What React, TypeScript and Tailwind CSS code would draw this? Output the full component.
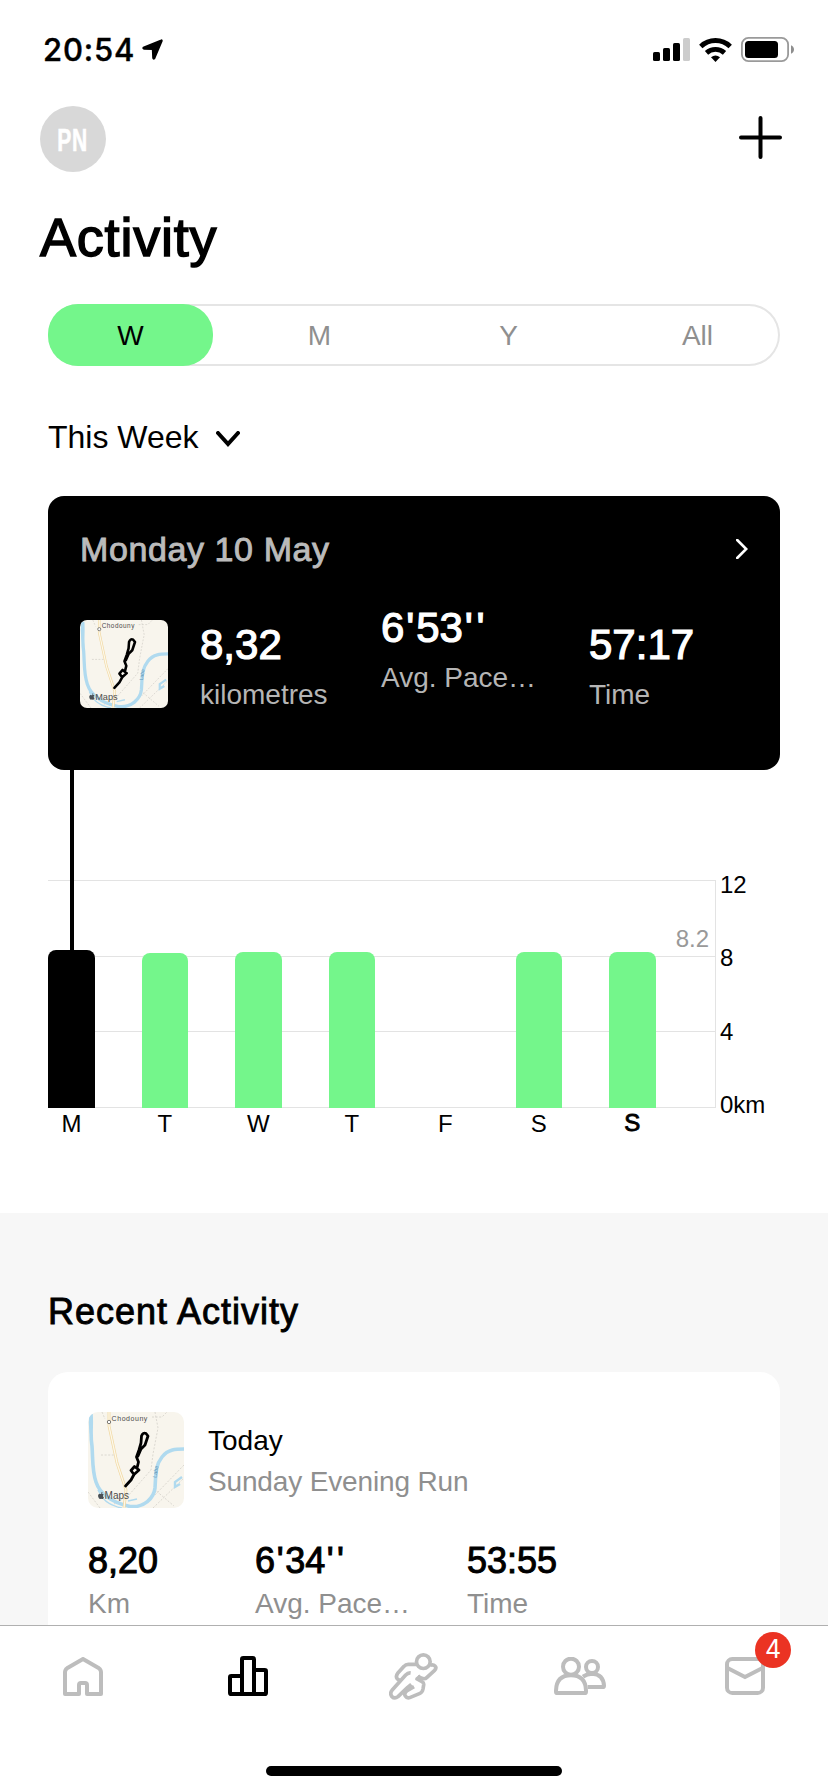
import type { ReactNode } from "react";
import { FaApple } from "react-icons/fa";

const medium = "[-webkit-text-stroke:0.9px_currentColor]";

const periods = ["W", "M", "Y", "All"];

const week = [
  { label: "M", height: 158, selected: true },
  { label: "T", height: 155 },
  { label: "W", height: 156 },
  { label: "T", height: 156 },
  { label: "F", height: 0 },
  { label: "S", height: 156 },
  { label: "S", height: 156, today: true },
];

const axisLabels = ["12", "8", "4", "0km"];

function StatusBar() {
  return (
    <div className="flex h-[99px] shrink-0 items-center justify-between pl-[43px] pr-[34px]">
      <div className="flex items-center">
        <span className="font-[Inter,sans-serif] text-[31px] leading-[40px] font-medium tracking-[0.8px] [-webkit-text-stroke:0.4px_currentColor]">
          20:54
        </span>
        <svg className="ml-[7px] h-[21px] w-[21px]" viewBox="0 0 21 21">
          <path
            d="M19.3 1.2 1.3 8.4Q.8 9.8 2 9.9L10.6 10.2 11 18.8Q11.3 20.5 12.5 19.4L19.9 2Q20 .9 19.3 1.2Z"
            fill="black"
            stroke="black"
            strokeWidth="1.6"
            strokeLinejoin="round"
          />
        </svg>
      </div>
      <div className="flex items-center">
        <svg className="h-[23px] w-[37px]" viewBox="0 0 37 23">
          <rect x="0" y="14" width="7" height="9" rx="1.6" />
          <rect x="10" y="10" width="7" height="13" rx="1.6" />
          <rect x="20" y="5" width="7" height="18" rx="1.6" />
          <rect x="30" y="0" width="7" height="23" rx="1.6" fill="#cccccc" />
        </svg>
        <svg className="ml-[9px] h-[24px] w-[33px]" viewBox="0 0 33 24" fill="none" stroke="black">
          <path d="M1.8 8.4Q8 2.5 16.5 2.5T31.2 8.4" strokeWidth="4.9" />
          <path d="M7.5 14.8Q11.3 11.4 16.5 11.4T25.5 14.8" strokeWidth="4.9" />
          <path d="M16.5 24 12 19.3Q16.5 15.7 21 19.3Z" fill="black" stroke="none" />
        </svg>
        <svg className="ml-[9px] h-[25px] w-[53px]" viewBox="0 0 53 25">
          <rect x="0.9" y="0.9" width="46.2" height="23.2" rx="6.5" fill="none" stroke="#9a9a9a" strokeWidth="1.8" />
          <rect x="4" y="4" width="33" height="17" rx="3.5" />
          <path d="M50 8.2Q53 9.6 53 12.5T50 16.8Z" fill="#8e8e8e" />
        </svg>
      </div>
    </div>
  );
}

function MapThumb({ className }: { className: string }) {
  return (
    <svg className={className} viewBox="0 0 96 96" fill="none">
      <rect width="96" height="96" fill="#f8f5ed" />
      <g stroke="#d3d0c9" strokeWidth="0.8" strokeDasharray="2 1.6">
        <path d="M67 0 70 16 65 42 63 58 40 84 26 92" />
        <path d="M96 53 66 84M66 77 86 94M0 80 12 96M65 96 96 66M64 5H74L79 0" />
        <path d="M13 43H27M14 0 17 7" />
      </g>
      <path d="M3 2C4 14 2 22 4 34C5 48 4 58 8 70C12 82 22 90 42 94.5C56 96 66 86 67 76C68 62 67 54 74 45C80 37 88 37 97 37" stroke="#b0daef" strokeWidth="3.6" />
      <path d="M2.5 4C0 14 4 24 4 30" stroke="#b0daef" strokeWidth="2" />
      <path d="M10 78Q16 93 34 96M40 89 49 87" stroke="#b0daef" strokeWidth="1.4" />
      <path d="M94 65 87 70 87 75 92 72" stroke="#b0daef" strokeWidth="2.4" />
      <path d="M21 0V14L29 51 38 78 36 96" stroke="#f1d9a4" strokeWidth="2.8" />
      <path d="M21 0V14L29 51 38 78 36 96" stroke="#fdf8ea" strokeWidth="1.3" />
      <path
        d="M37.5 74 43 68 46 62.5 43 58.5 46.5 54.5 51 58 46 62.5M49 56 50.5 50 48.5 45 51 38 53 31 53.5 24Q55 20 58 21.5L60 24 57 33 53 37 50 44"
        stroke="black"
        strokeWidth="2.8"
        strokeLinejoin="round"
        strokeLinecap="round"
      />
      <circle cx="21" cy="10" r="1.7" fill="white" stroke="#5b5b5b" strokeWidth="0.8" />
      <text x="23.6" y="8.6" fontFamily="Liberation Sans, sans-serif" fontSize="7" letterSpacing="0.55" fill="#4a4a4a">
        Chodouny
      </text>
      <text x="68.5" y="66" fontFamily="Liberation Sans, sans-serif" fontSize="5.5" fill="#5d93b5" transform="rotate(-80 68.5 66)">
        Labe
      </text>
      <FaApple x="9" y="79.5" size="8" color="#4a5055" />
      <text x="16.6" y="87" fontFamily="Liberation Sans, sans-serif" fontSize="10" fill="#4c4c4c">
        Maps
      </text>
    </svg>
  );
}

// minute and second marks get a little air on both sides
function StatValue({ value }: { value: string }) {
  return (
    <>
      {value.split("").map((char, index) => (
        <span key={index} className={char === "'" ? "mx-[0.045em]" : ""}>
          {char}
        </span>
      ))}
    </>
  );
}

function CardStat({ value, label, className = "" }: { value: string; label: string; className?: string }) {
  return (
    <div className={className}>
      <div className="text-[42px] leading-[48px] text-white [-webkit-text-stroke:1.2px_currentColor]">
        <StatValue value={value} />
      </div>
      <div className="mt-[10px] text-[28px] leading-[32px] text-[#b5b5b5]">{label}</div>
    </div>
  );
}

function SelectedDayCard() {
  return (
    <div className="mx-12 mt-[39px] h-[274px] shrink-0 rounded-2xl bg-black px-8 pt-[33px]">
      <div className="flex items-center justify-between">
        <span className={`text-[34px] leading-[40px] tracking-[0.6px] text-[#bbbbbb] ${medium}`}>Monday 10 May</span>
        <svg className="h-[20px] w-[12px]" viewBox="0 0 12 20" fill="none" stroke="white" strokeWidth="2.6">
          <path d="M1.2 1 10.2 10 1.2 19" strokeLinecap="round" />
        </svg>
      </div>
      <div className="mt-[51px] flex">
        <MapThumb className="mr-8 h-[88px] w-[88px] shrink-0 rounded-[7px]" />
        <CardStat className="mt-px w-[181px]" value="8,32" label="kilometres" />
        <CardStat className="-mt-4 w-[208px]" value="6'53''" label="Avg. Pace…" />
        <CardStat className="mt-px" value="57:17" label="Time" />
      </div>
    </div>
  );
}

function WeekChart() {
  return (
    <div className="relative flex h-[443px] shrink-0 pl-12 pt-[110px]">
      <div className="absolute left-[70px] top-0 z-10 h-[182px] w-1 bg-black" />
      <div className="w-[668px]">
        <div className="relative h-[228px] border-r border-[#e3e3e3]">
          <div className="absolute inset-0 flex flex-col justify-between">
            {axisLabels.map((label) => (
              <div key={label} className="h-px bg-[#e3e3e3]" />
            ))}
          </div>
          <div className="relative flex h-full items-end gap-[46.75px]">
            {week.map((day, index) => (
              <div
                key={index}
                className={`w-[46.75px] shrink-0 rounded-t-lg ${day.selected ? "bg-black" : "bg-[#74f68b]"}`}
                style={{ height: day.height }}
              />
            ))}
          </div>
          <span className="absolute right-[6px] top-[47px] text-[24px] leading-[24px] text-[#999999]">8.2</span>
        </div>
        <div className="mt-1 flex gap-[46.75px]">
          {week.map((day, index) => (
            <div
              key={index}
              className={`w-[46.75px] shrink-0 text-center text-[24px] leading-[24px] ${day.today ? "-mt-px [-webkit-text-stroke:0.9px_black]" : ""}`}
            >
              {day.label}
            </div>
          ))}
        </div>
      </div>
      <div className="-mt-[7px] ml-1 flex h-[244px] flex-col justify-between text-[24px] leading-[24px]">
        {axisLabels.map((label) => (
          <span key={label}>{label}</span>
        ))}
      </div>
    </div>
  );
}

function RunStat({ value, label, className = "" }: { value: string; label: string; className?: string }) {
  return (
    <div className={className}>
      <div className="text-[36px] leading-[40px] [-webkit-text-stroke:1px_currentColor]">
        <StatValue value={value} />
      </div>
      <div className="mt-[7px] text-[28px] leading-[32px] text-[#8f8f8f]">{label}</div>
    </div>
  );
}

function RecentActivity() {
  return (
    <div className="min-h-0 flex-1 overflow-hidden bg-[#f7f7f7] px-12 pt-[77px]">
      <h2 className={`text-[36px] leading-[44px] tracking-[1px] ${medium}`}>Recent Activity</h2>
      <div className="mt-[38px] h-[300px] rounded-[20px] bg-white p-10">
        <div className="flex items-center gap-6">
          <MapThumb className="h-[96px] w-[96px] rounded-[10px]" />
          <div className="mt-0.5 flex flex-col gap-[9px] text-[28px] leading-[32px]">
            <span>Today</span>
            <span className="tracking-[-0.15px] text-[#8f8f8f]">Sunday Evening Run</span>
          </div>
        </div>
        <div className="mt-[33px] flex">
          <RunStat className="w-[167px]" value="8,20" label="Km" />
          <RunStat className="w-[212px]" value="6'34''" label="Avg. Pace…" />
          <RunStat value="53:55" label="Time" />
        </div>
      </div>
    </div>
  );
}

function Tab({ children }: { children: ReactNode }) {
  return <div className="flex h-full flex-1 items-center justify-center">{children}</div>;
}

function TabBar() {
  return (
    <div className="h-[167px] shrink-0 border-t border-[#b0b0b0] bg-white">
      <div className="flex h-[100px] text-[#bdbdbd]">
        <Tab>
          <svg className="h-[39px] w-[40px]" viewBox="189 168 120 117" fill="none" stroke="currentColor" strokeWidth="12">
            <path d="M195 214Q195 206 201 202L249 174 297 202Q303 206 303 214V279H261V252Q261 246 255 246H243Q237 246 237 252V279H195Z" strokeLinejoin="round" />
          </svg>
        </Tab>
        <Tab>
          <svg className="h-[40px] w-[40px]" viewBox="687 168 120 120" fill="none" stroke="black" strokeWidth="12" strokeLinejoin="round">
            <rect x="693" y="228" width="36" height="54" rx="4" />
            <rect x="729" y="174" width="36" height="108" rx="4" />
            <rect x="765" y="210" width="36" height="72" rx="4" />
          </svg>
        </Tab>
        <Tab>
          <svg className="h-[47px] w-[49px]" viewBox="54 156 147 141" fill="none" stroke="currentColor" strokeWidth="11" strokeLinejoin="round">
            <circle cx="157" cy="182" r="20.5" />
            <path d="M136 190H112Q104 190 99 196L80 217Q73 226 79 234L86 238" />
            <path d="M119 216Q111 215 104 222L63 268Q56 277 62 286Q71 295 81 287L110 259 121 250" />
            <path d="M129 257 107 270Q98 277 103 285Q108 293 118 289L147 277Q154 274 156 264L158 252Q159 245 153 242L138 234 149 225" />
            <path d="M140 227 157 233Q163 234 168 229L190 209Q198 201 192 195Q187 190 177 193" />
          </svg>
        </Tab>
        <Tab>
          <svg className="h-[38px] w-[52px]" viewBox="549 171 156 114" fill="none" stroke="currentColor" strokeWidth="12" strokeLinejoin="round">
            <circle cx="600" cy="200" r="24" />
            <path d="M555 272Q556 226 600 226Q644 226 645 272V275Q645 279 641 279H559Q555 279 555 275Z" />
            <circle cx="663" cy="201" r="18" />
            <path d="M636 230Q648 221 664 221Q697 223 699 257Q699 261 695 261H650" />
          </svg>
        </Tab>
        <Tab>
          <div className="relative">
            <svg className="h-[38px] w-[40px]" viewBox="1065 171 120 114" fill="none" stroke="currentColor" strokeWidth="12">
              <rect x="1071" y="177" width="108" height="102" rx="16" />
              <path d="M1071 203 1125 231 1179 203" />
            </svg>
            <span className="absolute -right-[26px] -top-[25px] flex h-9 w-9 items-center justify-center rounded-full bg-[#eb3323] font-[Inter,sans-serif] text-[25px] text-white">
              4
            </span>
          </div>
        </Tab>
      </div>
      <div className="mx-auto mt-[40px] h-[10px] w-[296px] rounded-full bg-black" />
    </div>
  );
}

export default function App() {
  return (
    <div className="flex h-[1792px] w-[828px] flex-col overflow-hidden bg-white font-[Liberation_Sans,Arial,sans-serif] text-black">
      <StatusBar />

      <div className="mt-[7px] flex shrink-0 items-center justify-between pl-10 pr-[46px]">
        <div className="flex h-[66px] w-[66px] items-center justify-center rounded-full bg-[#d8d8d8]">
          <span className="mt-[3px] scale-x-[0.68] text-[31px] leading-[34px] font-bold tracking-[1px] text-white [-webkit-text-stroke:0.6px_white]">
            PN
          </span>
        </div>
        <svg className="mb-[3px] h-[43px] w-[43px]" viewBox="0 0 43 43" stroke="black" strokeWidth="4" strokeLinecap="round">
          <path d="M21.5 2V41M2 21.5H41" />
        </svg>
      </div>

      <h1 className="mt-[35px] shrink-0 pl-10 text-[54px] leading-[60px] tracking-[0.8px] [-webkit-text-stroke:1.5px_black]">
        Activity
      </h1>

      <div className="mx-12 mt-[37px] flex h-[62px] shrink-0 justify-between rounded-full shadow-[inset_0_0_0_2px_#e5e5e5]">
        {periods.map((period, index) => (
          <div
            key={period}
            className={`flex w-[165px] items-center justify-center rounded-[30px] pt-0.5 text-[28px] ${index === 0 ? "bg-[#74f68b] text-black" : "text-[#8f8f8f]"}`}
          >
            {period}
          </div>
        ))}
      </div>

      <div className="mt-[51px] flex shrink-0 items-center pl-12 text-[32px] leading-[40px]">
        This Week
        <svg className="ml-[17px] mt-[4px] h-[16px] w-[24px]" viewBox="0 0 24 16" fill="none" stroke="black" strokeWidth="4" strokeLinecap="round">
          <path d="M2 2 12 13 22 2" />
        </svg>
      </div>

      <SelectedDayCard />
      <WeekChart />
      <RecentActivity />
      <TabBar />
    </div>
  );
}
